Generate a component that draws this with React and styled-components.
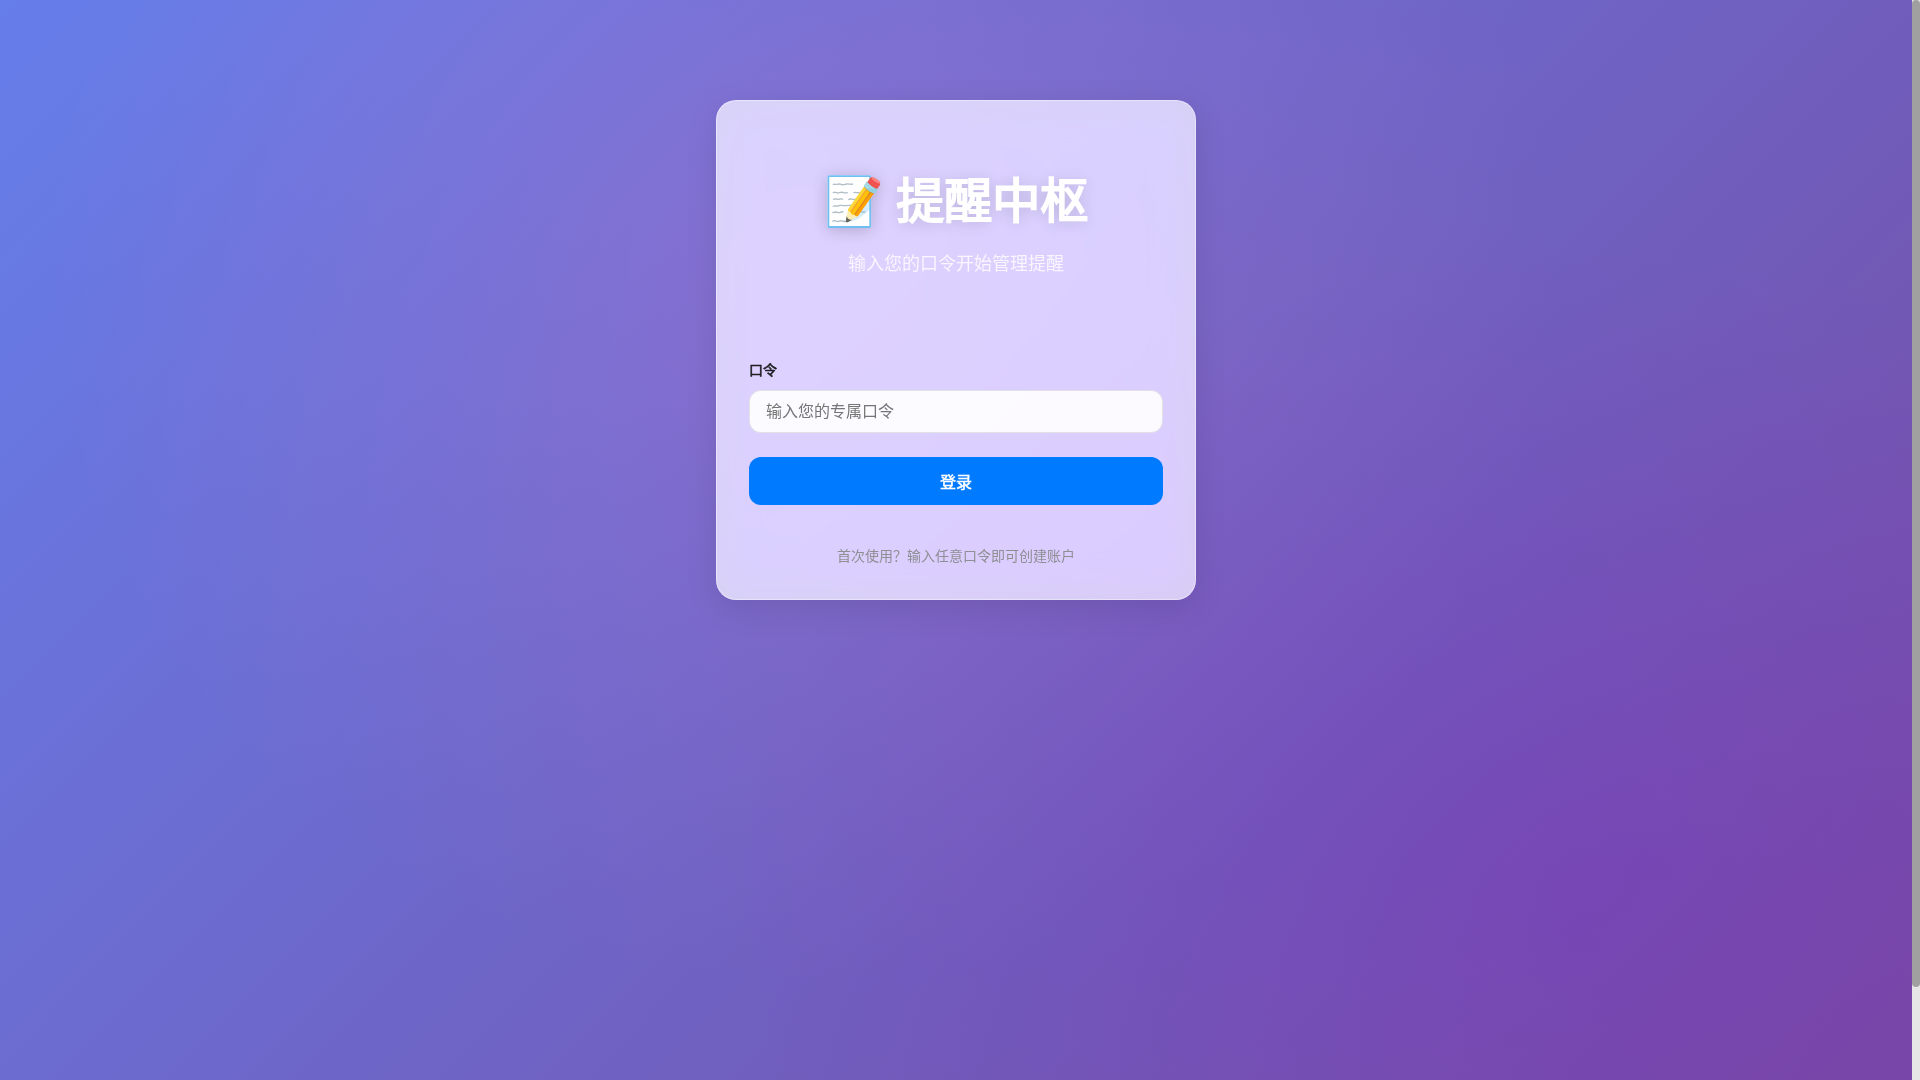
import React from 'react';
import styled, { createGlobalStyle } from 'styled-components';

const GlobalStyle = createGlobalStyle`
  * {
    box-sizing: border-box;
  }

  html,
  body {
    margin: 0;
    padding: 0;
    height: 100%;
    overflow: hidden;
  }

  body {
    font-family: "Noto Sans CJK SC", "Noto Sans", sans-serif;
  }
`;

const Shell = styled.div`
  display: flex;
  height: 100vh;
`;

const Main = styled.main`
  flex: 1;
  min-width: 0;
  padding-top: 100px;
  display: flex;
  justify-content: center;
  align-items: flex-start;
  background:
    radial-gradient(ellipse 760px 720px at 42% 25%, rgba(255, 125, 200, 0.18), transparent),
    radial-gradient(ellipse 860px 640px at 83% 82%, rgba(130, 30, 200, 0.24), transparent),
    linear-gradient(135deg, #667eea 0%, #764ba2 100%);
`;

const ScrollTrack = styled.div`
  flex: none;
  width: 8px;
  background: #e6e6e6;
`;

const ScrollThumb = styled.div`
  height: 987px;
  background: #a0a0a0;
  border-radius: 4px;
`;

const Card = styled.div`
  width: 480px;
  height: 500px;
  padding: 60px 32px 32px;
  background: rgba(255, 255, 255, 0.7);
  backdrop-filter: blur(20px) saturate(180%);
  border: 1px solid rgba(255, 255, 255, 0.4);
  border-radius: 20px;
  box-shadow: 0 8px 32px rgba(0, 0, 0, 0.1);
`;

const Header = styled.div`
  text-align: center;
  margin-bottom: 83px;
`;

const Title = styled.h1`
  margin: 0 0 16px;
  font-size: 48px;
  line-height: 72px;
  font-weight: 400;
  color: #fff;
  -webkit-text-stroke: 2px #fff;
  text-shadow: 0 2px 16px rgba(0, 0, 0, 0.2);
`;

const Emoji = styled.span`
  margin-right: 2px;
  -webkit-text-stroke: 0;
`;

const Subtitle = styled.p`
  margin: 0;
  font-size: 18px;
  line-height: 27px;
  color: rgba(255, 255, 255, 0.8);
`;

const Label = styled.label`
  display: block;
  margin-bottom: 10px;
  font-size: 14px;
  line-height: 21px;
  font-weight: 400;
  color: #1d1d1f;
  -webkit-text-stroke: 0.5px #1d1d1f;
`;

const Input = styled.input`
  display: block;
  width: 100%;
  height: 43px;
  padding: 0 16px 4px;
  font-family: inherit;
  font-size: 16px;
  color: #1d1d1f;
  background: rgba(255, 255, 255, 0.9);
  border: 1px solid rgba(0, 0, 0, 0.1);
  border-radius: 12px;
  outline: none;

  &::placeholder {
    color: #757575;
  }
`;

const Submit = styled.button`
  display: block;
  width: 100%;
  height: 48px;
  margin-top: 24px;
  font-family: inherit;
  font-size: 16px;
  font-weight: 400;
  color: #fff;
  -webkit-text-stroke: 0.5px #fff;
  background: #007aff;
  border: none;
  border-radius: 12px;
`;

const Hint = styled.p`
  margin: 40px 0 0;
  text-align: center;
  font-size: 14px;
  line-height: 21px;
  color: #8e8e93;
`;

export default function App() {
  return (
    <Shell>
      <GlobalStyle />
      <Main>
        <Card>
          <Header>
            <Title>
              <Emoji>📝</Emoji> 提醒中枢
            </Title>
            <Subtitle>输入您的口令开始管理提醒</Subtitle>
          </Header>
          <form>
            <Label htmlFor="token">口令</Label>
            <Input id="token" type="text" placeholder="输入您的专属口令" />
            <Submit type="button">登录</Submit>
          </form>
          <Hint>首次使用？输入任意口令即可创建账户</Hint>
        </Card>
      </Main>
      <ScrollTrack>
        <ScrollThumb />
      </ScrollTrack>
    </Shell>
  );
}
